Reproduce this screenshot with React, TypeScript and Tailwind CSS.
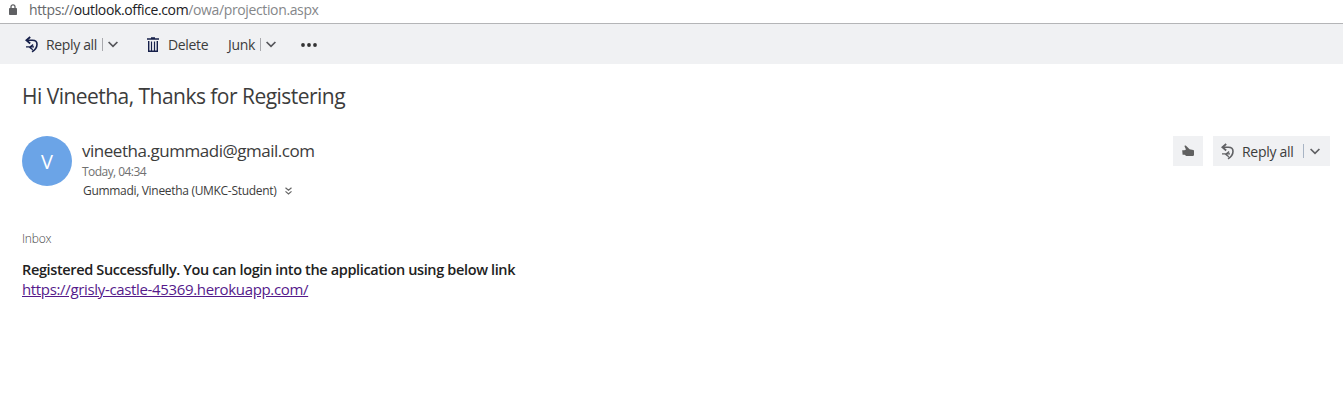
import React from 'react';

function ReplyAllIcon({ className }: { className: string }) {
  return (
    <svg width="13" height="17" viewBox="0 0 13 17" fill="none" stroke="currentColor" className={className}>
      <path d="M5.2 1 1.4 4.3l3.8 3.2" strokeWidth="1.8" />
      <path d="M2 4.3h5.4c3 0 4.6 1.5 4.6 3.9 0 3.2-1.6 5.6-5 7.6" strokeWidth="1.6" />
      <path d="M8.2 8.6 4.6 11.2l3.2 2.6M1 10.9h8" strokeWidth="1.3" />
    </svg>
  );
}

function Chevron({ className }: { className: string }) {
  return (
    <svg width="10" height="7" viewBox="0 0 10 7" fill="none" stroke="currentColor" className={className}>
      <path d="m.6 1 4.4 4.4L9.4 1" strokeWidth="1.7" />
    </svg>
  );
}

function AddressBar() {
  return (
    <div className="flex h-6 border-b border-[#b4b5b7] bg-white pl-[9px]">
      <svg width="8" height="11" viewBox="0 0 8 11" className="mt-[4px] shrink-0 text-[#5f6063]">
        <rect x="0" y="4" width="8" height="7" rx=".8" fill="currentColor" />
        <path d="M2 5V2.8a2 2 0 0 1 4 0V5" fill="none" stroke="currentColor" strokeWidth="1.3" />
      </svg>
      <span className="ml-[12px] h-5 whitespace-nowrap text-[14px] leading-[20px] tracking-[-0.37px] text-[#85878a]">
        <span className="text-[#66686b]">https://</span>
        <span className="text-[#202124]">outlook.office.com</span>/owa/projection.aspx
      </span>
    </div>
  );
}

function Toolbar() {
  return (
    <div className="flex h-10 items-center bg-[#f0f1f3] pl-[25px] text-[14px] text-[#3c3c3c]">
      <ReplyAllIcon className="shrink-0 text-[#16204a]" />
      <span className="ml-[8px] w-[52px] whitespace-nowrap pt-px tracking-[-0.35px]">Reply all</span>
      <span className="ml-[4px] h-[13px] w-px bg-[#a8a9ad]" />
      <Chevron className="ml-[5px] text-[#55565a]" />
      <svg width="12" height="15" viewBox="0 0 12 15" fill="none" stroke="#16204a" className="ml-[29px] shrink-0">
        <path d="M0 2h12M4 1h4" strokeWidth="1.6" />
        <path d="M1.7 4v10.2h8.6V4" strokeWidth="1.4" />
        <path d="M4.5 4.5V14M7.5 4.5V14" strokeWidth="1.2" />
      </svg>
      <span className="ml-[9px] w-[42px] whitespace-nowrap pt-px tracking-[-0.35px]">Delete</span>
      <span className="ml-[18px] w-[29px] whitespace-nowrap pt-px tracking-[-0.3px]">Junk</span>
      <span className="ml-[3px] h-[13px] w-px bg-[#a8a9ad]" />
      <Chevron className="ml-[5px] text-[#55565a]" />
      <svg width="16" height="4" viewBox="0 0 16 4" fill="#333333" className="ml-[25px] mt-[2px]">
        <circle cx="2" cy="2" r="1.9" />
        <circle cx="8" cy="2" r="1.9" />
        <circle cx="14" cy="2" r="1.9" />
      </svg>
    </div>
  );
}

function MessageHeader() {
  return (
    <header className="mt-[25px] flex items-start">
      <div className="flex size-[50px] shrink-0 items-center justify-center rounded-full bg-[#6ba4e7] pt-px text-[20px] leading-none text-white">
        V
      </div>
      <div className="ml-[10px] flex-1 whitespace-nowrap pt-[4px]">
        <div className="text-[17px] leading-[22px] tracking-[-0.47px] text-[#3c3c3c]">vineetha.gummadi@gmail.com</div>
        <div className="text-[12px] leading-[19px] tracking-[-0.55px] text-[#707070]">Today, 04:34</div>
        <div className="ml-px flex items-center text-[12px] leading-[19px] tracking-[-0.31px] text-[#3c3c3c]">
          <span className="w-[194px]">Gummadi, Vineetha (UMKC-Student)</span>
          <svg width="7" height="8" viewBox="0 0 7 8" fill="none" stroke="#666666" strokeWidth="1.2" className="ml-[8px]">
            <path d="m.5.7 3 2.6 3-2.6M.5 4.4l3 2.6 3-2.6" />
          </svg>
        </div>
      </div>
      <div className="flex gap-[10px]">
        <button className="flex size-[30px] items-center justify-center bg-[#f0f1f3]">
          <svg width="12" height="12" viewBox="0 0 12 12" fill="#606060">
            <path d="M.2 5.2h2.2L4 4.4 2.6 1.4C2.3.6 3.4.1 4 .8l3.6 3.5 3.6.6c.6.1.8.5.8 1v4.2c0 .5-.4.8-.9.8H4.3L2.6 9.8H.6z" />
          </svg>
        </button>
        <button className="flex h-[30px] w-[117px] items-center bg-[#f0f1f3] pl-[8px] text-[14px] text-[#3c3c3c]">
          <ReplyAllIcon className="shrink-0 text-[#606164]" />
          <span className="ml-[8px] w-[52px] whitespace-nowrap pt-px text-left tracking-[-0.3px]">Reply all</span>
          <span className="ml-[9px] h-[14px] w-px bg-[#a8b4c4]" />
          <Chevron className="ml-[6px] text-[#606164]" />
        </button>
      </div>
    </header>
  );
}

export default function App() {
  return (
    <div className="h-[403px] overflow-hidden bg-white font-['Open_Sans',sans-serif]">
      <AddressBar />
      <Toolbar />
      <main className="pl-[22px] pr-[13px] pt-[17px]">
        <h1 className="h-[30px] whitespace-nowrap text-[21px] leading-[30px] tracking-[-0.53px] text-[#3c3c3c]">
          Hi Vineetha, Thanks for Registering
        </h1>
        <MessageHeader />
        <section className="mt-[29px] whitespace-nowrap">
          <div className="text-[12px] font-light leading-[20px] tracking-[-0.2px] text-[#444444]">Inbox</div>
          <p className="mt-[11px] text-[14.5px] font-semibold leading-[20px] tracking-[-0.36px] text-[#212121]">
            Registered Successfully. You can login into the application using below link
          </p>
          <a href="#" className="-mt-px block w-fit text-[15px] leading-[20px] tracking-[-0.34px] text-[#551a8b] underline">
            https://grisly-castle-45369.herokuapp.com/
          </a>
        </section>
      </main>
    </div>
  );
}
